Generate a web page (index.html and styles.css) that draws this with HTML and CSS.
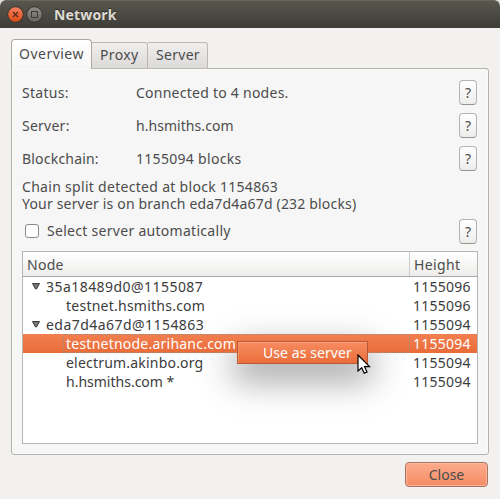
FILE: index.html
```html
<!DOCTYPE html>
<html lang="en">
<head>
<meta charset="utf-8">
<title>Network</title>
<link rel="stylesheet" href="styles.css">
</head>
<body>
<div class="window">
  <header class="titlebar">
    <svg class="controls" width="38" height="20" viewBox="0 0 38 20">
      <defs>
        <linearGradient id="orange" x2="0" y2="1"><stop stop-color="#f58464"/><stop offset="1" stop-color="#dd4814"/></linearGradient>
        <linearGradient id="grey" x2="0" y2="1"><stop stop-color="#908e86"/><stop offset="1" stop-color="#65635b"/></linearGradient>
      </defs>
      <circle cx="9.500" cy="10.500" r="7.800" fill="url(#orange)" stroke="#35332e"/>
      <path d="M7 8l5 5M12 8l-5 5" stroke="#57291a" stroke-width="1.300"/>
      <circle cx="28.500" cy="10.500" r="7.800" fill="url(#grey)" stroke="#35332e"/>
      <rect x="25.500" y="7.500" width="6" height="6" fill="none" stroke="#3b3a35"/>
    </svg>
    <h1 class="title"><span class="t-title">Network</span></h1>
  </header>
  <main class="content">
    <nav class="tabs">
      <div class="tab active"><span class="t-overview">Overview</span></div>
      <div class="tab"><span class="t-proxy">Proxy</span></div>
      <div class="tab last"><span class="t-server">Server</span></div>
    </nav>
    <section class="pane">
      <div class="field"><span class="label"><span class="t-status">Status:</span></span><span class="value"><span class="t-connected">Connected to 4 nodes.</span></span><button class="help">?</button></div>
      <div class="field"><span class="label"><span class="t-serverlabel">Server:</span></span><span class="value"><span class="t-host">h.hsmiths.com</span></span><button class="help">?</button></div>
      <div class="field"><span class="label"><span class="t-chain">Blockchain:</span></span><span class="value"><span class="t-blocks">1155094 blocks</span></span><button class="help">?</button></div>
      <div class="split"><div class="t-split">Chain split detected at block 1154863</div><div class="t-branch">Your server is on branch eda7d4a67d (232 blocks)</div></div>
      <div class="field auto"><span class="checkbox"></span><span class="value"><span class="t-auto">Select server automatically</span></span><button class="help">?</button></div>
      <div class="tree">
        <div class="head"><span class="node"><span class="t-node">Node</span></span><span class="height"><span class="t-height">Height</span></span></div>
        <div class="row"><span class="node"><svg class="arrow" width="8" height="7" viewBox="0 0 8 7"><path d="M.5.500h7L4.500 6h-1z" fill="#777" stroke="#3c3b37"/></svg><span class="t-branch1">35a18489d0@1155087</span></span><span class="height num">1155096</span></div>
        <div class="row child"><span class="node"><span class="t-testnet">testnet.hsmiths.com</span></span><span class="height num">1155096</span></div>
        <div class="row"><span class="node"><svg class="arrow" width="8" height="7" viewBox="0 0 8 7"><path d="M.5.500h7L4.500 6h-1z" fill="#777" stroke="#3c3b37"/></svg><span class="t-branch2">eda7d4a67d@1154863</span></span><span class="height num">1155094</span></div>
        <div class="row child selected"><span class="node"><span class="t-arihanc">testnetnode.arihanc.com</span></span><span class="height num">1155094</span></div>
        <div class="row child"><span class="node"><span class="t-electrum">electrum.akinbo.org</span></span><span class="height num">1155094</span></div>
        <div class="row child"><span class="node"><span class="t-hsmiths">h.hsmiths.com *</span></span><span class="height num">1155094</span></div>
        <div class="shade"></div>
        <div class="menu"><span class="t-use">Use as server</span></div>
        <svg class="cursor" width="14" height="21" viewBox="0 0 14 21"><path d="M1 1v16l3.700-3.300 2.500 5.500 2.800-1.200-2.500-5.300h5z" fill="#fff" stroke="#000" stroke-width="1.200"/></svg>
      </div>
    </section>
    <footer><button class="close"><span class="t-close">Close</span></button></footer>
  </main>
</div>
</body>
</html>
```

FILE: styles.css
```css
* { box-sizing: border-box; }
body { margin: 0; background: #ddd; color: #4c4c4c; font: 14px/19px "Noto Sans", sans-serif; }
button { font: inherit; color: inherit; padding: 0; }
.window { width: 500px; height: 499px; background: #f2f1f0; border-radius: 6px 6px 0 0; overflow: hidden; }
.titlebar { height: 28px; display: flex; align-items: center; padding-left: 6px; background: linear-gradient(#59574e, #3e3d38); box-shadow: inset 0 1px #69675d; border-radius: 6px 6px 0 0; }
.controls { margin-top: -1px; }
.title { margin: 2px 0 0 10px; color: #dfdbd2; font-size: 14px; line-height: 20px; text-shadow: 0 -1px #2b2a26; }
.content { padding: 11px 11px 0; }
.tabs { height: 30px; display: flex; align-items: flex-end; position: relative; margin-bottom: -1px; }
.tab { height: 27px; width: 56px; padding: 2px 0 0 8px; border: 1px solid #bcb8b2; border-left: 0; background: linear-gradient(#f0efee, #dcdad8); border-radius: 0 3px 0 0; white-space: nowrap; }
.tab.last { width: 60px; padding-left: 8px; }
.tab.active { width: 81px; height: 30px; padding: 4px 0 0 7px; border: 1px solid #aea99f; border-bottom: 0; border-radius: 4px 4px 0 0; background: linear-gradient(#fff, #f6f6f6); }
.pane { height: 387px; border: 1px solid #b4b0aa; border-radius: 0 3px 3px 3px; background: #f6f6f6; padding: 10px 10px 0; box-shadow: inset 0 0 0 1px #fafafa; }
.field { height: 26px; margin-bottom: 7px; display: flex; align-items: center; white-space: nowrap; }
.label { width: 114px; }
.value { flex: 1; }
.help { width: 18px; height: 25px; margin: 1px 1px 0 0; border: 1px solid #b7b4af; border-bottom-color: #97938d; border-radius: 4px; background: linear-gradient(#fff, #ededec); }
.split { height: 40px; line-height: 17px; white-space: nowrap; }
.auto { margin-bottom: 7px; }
.auto .value { margin-top: -2px; }
.checkbox { width: 14px; height: 14px; margin: 0 8px 0 3px; border: 1px solid #8e8983; border-radius: 3px; background: #fff; }
.tree { height: 193px; border: 1px solid #b7b6b2; background: #fff; position: relative; width: 456px; }
.head, .row { display: flex; white-space: nowrap; }
.head { height: 25px; line-height: 26px; background: linear-gradient(#fff, #eeedeb); border-bottom: 1px solid #aaa8a4; }
.head .node { padding-left: 4px; border-right: 1px solid #ccc; }
.node { flex: 1; height: 100%; border: 0 solid transparent; }
.height { width: 67px; padding-left: 4px; }
.num { padding-left: 3px; letter-spacing: .25px; }
.row { height: 19px; line-height: 19px; color: #3c3c3c; position: relative; z-index: 1; }
.row .node { display: flex; padding-left: 9px; }
.arrow { margin: 6px 6px 0 0; }
.row.child .node { padding-left: 43px; }
.row.selected { background: linear-gradient(#f27f50, #e96c38); color: #fff; }
.row.child.selected .node { margin-left: 40px; padding-left: 2px; border: 1px dotted #9a8f84; line-height: 17px; }
.shade { position: absolute; left: 222px; top: 98px; width: 116px; height: 12px; box-shadow: 0 8px 34px 12px rgba(0,0,0,.34); }
.menu { position: absolute; z-index: 2; left: 214px; top: 89px; width: 131px; height: 23px; padding-left: 25px; line-height: 22px; color: #fff; white-space: nowrap; border: 1px solid #b85a34; background: linear-gradient(#f88c60, #e96e3b); box-shadow: inset 0 1px #fba17c, inset 1px 0 #f58d65; }
.cursor { position: absolute; z-index: 3; left: 334px; top: 102px; }
footer { display: flex; justify-content: flex-end; padding: 7px 1px 0 0; }
.close { width: 83px; height: 25px; border: 1px solid #a67462; border-radius: 4px; background: linear-gradient(#fdab8c, #f58c64); box-shadow: inset 0 0 0 1px #fdb79c; }
.t-title { letter-spacing: .15px; }
.t-overview { letter-spacing: .48px; }
.t-proxy { letter-spacing: .35px; }
.t-server { letter-spacing: .3px; }
.t-status { letter-spacing: .3px; }
.t-serverlabel { letter-spacing: .25px; }
.t-chain { letter-spacing: .2px; }
.t-connected { letter-spacing: .25px; }
.t-blocks { letter-spacing: .3px; }
.t-host { letter-spacing: .05px; }
.t-split { letter-spacing: .3px; }
.t-branch { letter-spacing: .18px; }
.t-auto { letter-spacing: .29px; }
.t-node { letter-spacing: .3px; }
.t-height { letter-spacing: .35px; }
.t-branch1, .t-branch2 { letter-spacing: .45px; }
.t-testnet { letter-spacing: .24px; }
.t-arihanc { letter-spacing: .23px; }
.t-electrum { letter-spacing: .2px; }
.t-use { letter-spacing: .08px; }
```
